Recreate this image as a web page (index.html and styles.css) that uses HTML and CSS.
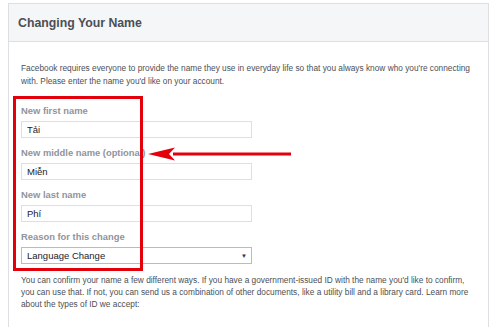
FILE: index.html
```
<!DOCTYPE html>
<html lang="en">
<head>
  <meta charset="UTF-8" />
  <title>Changing Your Name</title>
  <link rel="stylesheet" href="styles.css">
</head>
<body>
  <div class="page">
    <section class="panel">
      <div class="panel-header">
        <h2>Changing Your Name</h2>
      </div>
      <div class="panel-body">
        <p class="intro">Facebook requires everyone to provide the name they use in everyday life so that you always know who you're connecting with. Please enter the name you'd like on your account.</p>

        <div class="field">
          <label>New first name</label>
          <input type="text" value="Tải" />
        </div>
        <div class="field">
          <label>New middle name (optional)</label>
          <input type="text" value="Miễn" />
        </div>
        <div class="field">
          <label>New last name</label>
          <input type="text" value="Phí" />
        </div>
        <div class="field">
          <label>Reason for this change</label>
          <div class="select">
            <span>Language Change</span>
            <span class="caret">&#9660;</span>
          </div>
        </div>

        <p class="note">You can confirm your name a few different ways. If you have a government-issued ID with the name you'd like to confirm, you can use that. If not, you can send us a combination of other documents, like a utility bill and a library card. Learn more about the types of ID we accept:</p>
      </div>
    </section>

    <!-- annotation overlays -->
    <div class="highlight-box"></div>
    <svg class="arrow" width="150" height="16" viewBox="0 0 150 16">
      <rect x="26" y="6.5" width="118" height="3" fill="#e3000b" />
      <polygon points="1,8 28,1.5 22,8 28,14.5" fill="#e3000b" />
    </svg>
  </div>
</body>
</html>
```

FILE: styles.css
```
body {
  margin: 0;
  padding: 0;
  background: #ffffff;
  font-family: 'Liberation Sans', Arial, sans-serif;
  color: #4b4f56;
}
.page {
  position: relative;
  padding: 3px 11px 0 8px;
  height: 324px;
  overflow: hidden;
}
.panel {
  border: 1px solid #dddfe2;
  height: 340px;
}
.panel-header {
  background: #f5f6f7;
  border-bottom: 1px solid #dddfe2;
  height: 37px;
  display: flex;
  align-items: center;
  padding-left: 9px;
}
.panel-header h2 {
  margin: 0;
  font-size: 12.3px;
  font-weight: bold;
  color: #4b4f56;
}
.panel-body {
  padding: 0 6px 0 12px;
}
.intro {
  margin: 20px 0 16px;
  font-size: 8.3px;
  line-height: 13px;
  color: #4b4f56;
}
.field {
  display: flex;
  flex-direction: column;
  margin-bottom: 8px;
}
.field label {
  font-size: 9.4px;
  font-weight: bold;
  line-height: 13px;
  color: #90949c;
  margin-bottom: 4px;
}
.field input {
  width: 231px;
  height: 17px;
  box-sizing: border-box;
  border: 1px solid #dddfe2;
  padding: 0 5px;
  margin: 0;
  font-family: 'Liberation Sans', Arial, sans-serif;
  font-size: 9.5px;
  color: #1d2129;
  outline: none;
}
.select {
  width: 231px;
  height: 17px;
  box-sizing: border-box;
  border: 1px solid #a9bce6;
  display: flex;
  align-items: center;
  justify-content: space-between;
  padding: 0 4px 0 5px;
  font-size: 9.5px;
  color: #1d2129;
}
.select .caret {
  font-size: 6px;
  color: #333;
}
.note {
  margin: 11px 0 0;
  max-width: 459px;
  font-size: 8.3px;
  line-height: 11.8px;
  color: #4b4f56;
}
.highlight-box {
  position: absolute;
  left: 13px;
  top: 96px;
  width: 124px;
  height: 169px;
  border: 3px solid #e3000b;
}
.arrow {
  position: absolute;
  left: 147px;
  top: 146px;
}
```
